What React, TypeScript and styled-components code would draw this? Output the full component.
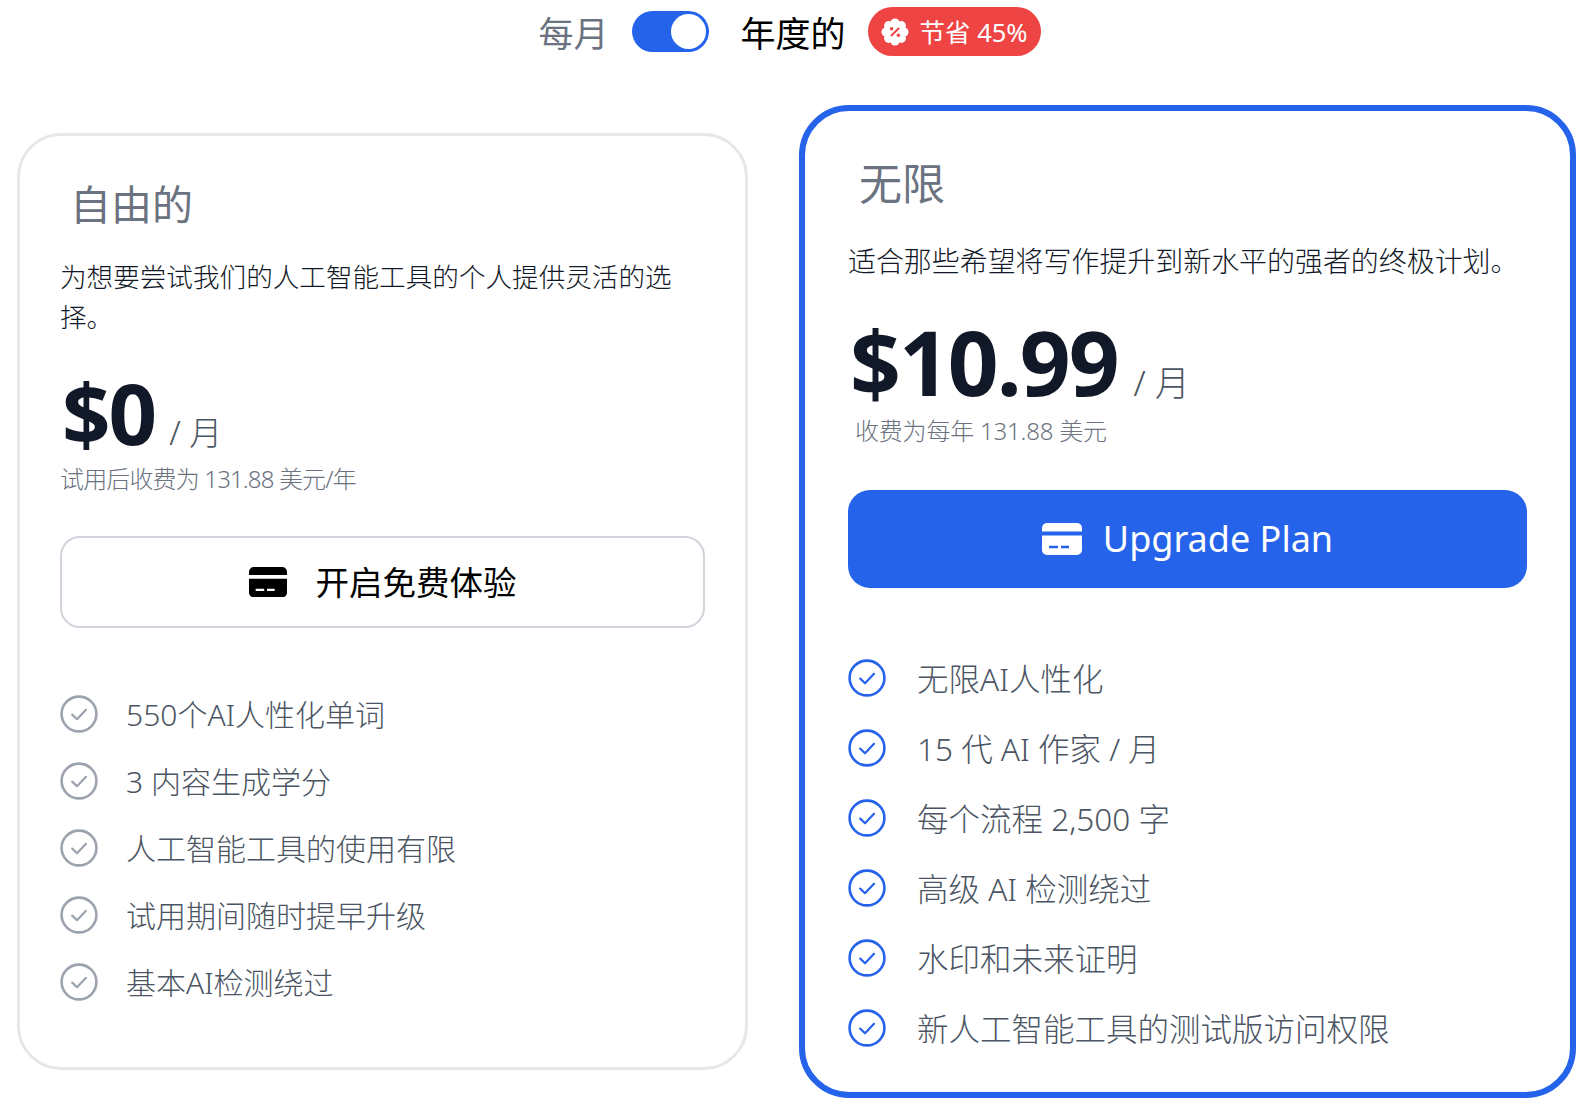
import React from "react";
import styled, { createGlobalStyle } from "styled-components";

const GlobalStyle = createGlobalStyle`
  html, body {
    margin: 0;
    padding: 0;
    background: #ffffff;
  }
  body {
    font-family: "Noto Sans", "Noto Sans CJK SC", sans-serif;
    font-weight: 300;
  }
`;

const Page = styled.div`
  width: 1589px;
  height: 1111px;
  overflow: hidden;
  display: flex;
  flex-direction: column;
  box-sizing: border-box;
  padding: 7px 13px 0 17px;
`;

const BillingBar = styled.div`
  display: flex;
  align-items: center;
  justify-content: center;
  height: 49px;
  padding-right: 14px;
`;

const BillingLabel = styled.span<{ $active?: boolean }>`
  margin-top: 3px;
  font-size: 35px;
  font-weight: 400;
  line-height: 49px;
  color: ${(props) => (props.$active ? "#000000" : "#6b7280")};
`;

const Toggle = styled.div`
  position: relative;
  width: 77px;
  height: 41px;
  margin: 0 32px 0 23px;
  border-radius: 21px;
  background: #2563eb;
`;

const Thumb = styled.div`
  position: absolute;
  top: 3px;
  right: 3px;
  width: 35px;
  height: 35px;
  border-radius: 50%;
  background: #ffffff;
`;

const SaveBadge = styled.div`
  display: flex;
  align-items: center;
  gap: 11px;
  height: 49px;
  margin-left: 22px;
  padding: 0 13px;
  border-radius: 25px;
  background: #ef4444;
  color: #ffffff;
  font-size: 25.5px;
  font-weight: 400;
`;

const SaveText = styled.span`
  margin-bottom: 3px;
`;

const Plans = styled.div`
  display: grid;
  grid-template-columns: 731px 777px;
  column-gap: 51px;
  align-items: center;
  height: 993px;
  margin-top: 49px;
`;

const Card = styled.div<{ $featured?: boolean }>`
  box-sizing: border-box;
  height: ${(props) => (props.$featured ? "993px" : "937px")};
  padding: ${(props) => (props.$featured ? "48px 43px 0" : "43px 40px 0")};
  border: ${(props) => (props.$featured ? "6px solid #2563eb" : "3px solid #e5e7eb")};
  border-radius: ${(props) => (props.$featured ? "50px" : "44px")};
  background: #ffffff;
`;

const PlanName = styled.h2<{ $featured?: boolean }>`
  margin: 0;
  padding-left: ${(props) => (props.$featured ? "11px" : "10px")};
  font-size: ${(props) => (props.$featured ? "43px" : "41px")};
  line-height: 50px;
  font-weight: 400;
  color: #6b7280;
`;

const Blurb = styled.p<{ $featured?: boolean }>`
  margin: ${(props) => (props.$featured ? "32px 0 0" : "28px 0 0")};
  font-size: ${(props) => (props.$featured ? "27.95px" : "26.6px")};
  line-height: 40px;
  color: #111827;
`;

const PriceRow = styled.div<{ $featured?: boolean }>`
  display: flex;
  align-items: baseline;
  margin-top: ${(props) => (props.$featured ? "31px" : "25px")};
  height: ${(props) => (props.$featured ? "102px" : "100px")};
  padding-left: 2px;
  line-height: 100px;
`;

const Amount = styled.span<{ $featured?: boolean }>`
  font-size: ${(props) => (props.$featured ? "89px" : "85px")};
  font-weight: 700;
  letter-spacing: -2px;
  color: #111827;
`;

const Period = styled.span<{ $featured?: boolean }>`
  margin-left: ${(props) => (props.$featured ? "16px" : "14px")};
  font-size: ${(props) => (props.$featured ? "35px" : "33px")};
  color: #4b5563;
`;

const Note = styled.div<{ $featured?: boolean }>`
  padding-left: ${(props) => (props.$featured ? "7px" : "0")};
  font-size: 24px;
  line-height: 34px;
  letter-spacing: ${(props) => (props.$featured ? "-0.2px" : "-0.85px")};
  color: #6b7280;
`;

const PlanButton = styled.button<{ $featured?: boolean }>`
  display: flex;
  align-items: center;
  justify-content: center;
  gap: ${(props) => (props.$featured ? "21px" : "29px")};
  box-sizing: border-box;
  width: 100%;
  height: ${(props) => (props.$featured ? "98px" : "92px")};
  margin-top: ${(props) => (props.$featured ? "42px" : "40px")};
  border: ${(props) => (props.$featured ? "none" : "2px solid #d1d5db")};
  border-radius: ${(props) => (props.$featured ? "22px" : "20px")};
  background: ${(props) => (props.$featured ? "#2563eb" : "#ffffff")};
  color: ${(props) => (props.$featured ? "#ffffff" : "#000000")};
  font-family: inherit;
  font-size: ${(props) => (props.$featured ? "36px" : "33.5px")};
  font-weight: 400;
`;

const ButtonLabel = styled.span<{ $featured?: boolean }>`
  margin-bottom: ${(props) => (props.$featured ? "1px" : "4px")};
`;

const Features = styled.ul<{ $featured?: boolean }>`
  display: flex;
  flex-direction: column;
  gap: ${(props) => (props.$featured ? "70px" : "67px")};
  margin: ${(props) => (props.$featured ? "89px 0 0" : "85px 0 0")};
  padding: 0;
  list-style: none;
`;

const Feature = styled.li<{ $featured?: boolean }>`
  display: flex;
  align-items: center;
  gap: ${(props) => (props.$featured ? "31px" : "28px")};
  height: 0;
  font-size: ${(props) => (props.$featured ? "31.5px" : "30px")};
  color: #4b5563;
`;

const CheckSvg = styled.svg`
  flex-shrink: 0;
  margin-top: 2px;
`;

const CardIcon = ({ hole, width }: { hole: string; width: number }) => (
  <svg width={width} height={(width * 32) / 40} viewBox="0 0 40 32">
    <path
      fill="currentColor"
      d="M0 8.5V5a5 5 0 0 1 5-5h30a5 5 0 0 1 5 5v3.5zM0 12.5h40V27a5 5 0 0 1-5 5H5a5 5 0 0 1-5-5z"
    />
    <path stroke={hole} strokeWidth="2.4" d="M7 24h9M19 24h8" />
  </svg>
);

const PercentSeal = () => (
  <svg width="28" height="28" viewBox="0 0 28 28">
    <g fill="#ffffff">
      <circle cx="14" cy="14" r="10.5" />
      {[0, 45, 90, 135, 180, 225, 270, 315].map((angle) => (
        <circle
          key={angle}
          cx={14 + 9 * Math.cos((angle * Math.PI) / 180)}
          cy={14 + 9 * Math.sin((angle * Math.PI) / 180)}
          r="4.6"
        />
      ))}
    </g>
    <path stroke="#ef4444" strokeWidth="2" strokeLinecap="round" d="M17.5 10.5l-7 7" />
    <circle cx="10.6" cy="10.8" r="1.7" fill="#ef4444" />
    <circle cx="17.4" cy="17.2" r="1.7" fill="#ef4444" />
  </svg>
);

const CheckIcon = ({ color }: { color: string }) => (
  <CheckSvg width="38" height="38" viewBox="0 0 38 38" fill="none">
    <circle cx="19" cy="19" r="17.4" stroke={color} strokeWidth="2.6" />
    <path
      d="M12.2 19.6l4.8 4.6 9-9.4"
      stroke={color}
      strokeWidth="2.2"
      strokeLinecap="round"
      strokeLinejoin="round"
    />
  </CheckSvg>
);

interface PlanProps {
  name: string;
  blurb: string;
  price: string;
  note: string;
  action: string;
  features: string[];
  featured?: boolean;
}

const Plan = (props: PlanProps) => {
  const { name, blurb, price, note, action, features, featured } = props;
  return (
    <Card $featured={featured}>
      <PlanName $featured={featured}>{name}</PlanName>
      <Blurb $featured={featured}>{blurb}</Blurb>
      <PriceRow $featured={featured}>
        <Amount $featured={featured}>{price}</Amount>
        <Period $featured={featured}>/ 月</Period>
      </PriceRow>
      <Note $featured={featured}>{note}</Note>
      <PlanButton $featured={featured}>
        <CardIcon hole={featured ? "#2563eb" : "#ffffff"} width={featured ? 40 : 38} />
        <ButtonLabel $featured={featured}>{action}</ButtonLabel>
      </PlanButton>
      <Features $featured={featured}>
        {features.map((feature) => (
          <Feature key={feature} $featured={featured}>
            <CheckIcon color={featured ? "#2563eb" : "#9ca3af"} />
            {feature}
          </Feature>
        ))}
      </Features>
    </Card>
  );
};

const App = () => (
  <Page>
    <GlobalStyle />
    <BillingBar>
      <BillingLabel>每月</BillingLabel>
      <Toggle>
        <Thumb />
      </Toggle>
      <BillingLabel $active>年度的</BillingLabel>
      <SaveBadge>
        <PercentSeal />
        <SaveText>节省 45%</SaveText>
      </SaveBadge>
    </BillingBar>
    <Plans>
      <Plan
        name="自由的"
        blurb="为想要尝试我们的人工智能工具的个人提供灵活的选择。"
        price="$0"
        note="试用后收费为 131.88 美元/年"
        action="开启免费体验"
        features={[
          "550个AI人性化单词",
          "3 内容生成学分",
          "人工智能工具的使用有限",
          "试用期间随时提早升级",
          "基本AI检测绕过",
        ]}
      />
      <Plan
        featured
        name="无限"
        blurb="适合那些希望将写作提升到新水平的强者的终极计划。"
        price="$10.99"
        note="收费为每年 131.88 美元"
        action="Upgrade Plan"
        features={[
          "无限AI人性化",
          "15 代 AI 作家 / 月",
          "每个流程 2,500 字",
          "高级 AI 检测绕过",
          "水印和未来证明",
          "新人工智能工具的测试版访问权限",
        ]}
      />
    </Plans>
  </Page>
);

export default App;
